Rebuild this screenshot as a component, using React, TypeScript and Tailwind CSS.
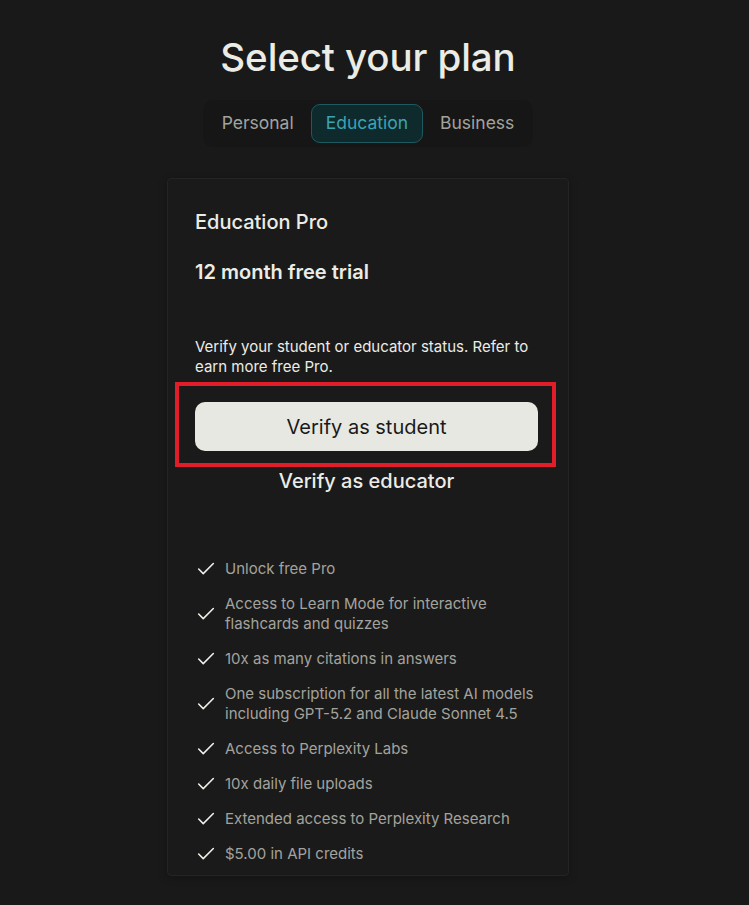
import { Check } from "lucide-react";

const features = [
  "Unlock free Pro",
  "Access to Learn Mode for interactive flashcards and quizzes",
  "10x as many citations in answers",
  "One subscription for all the latest AI models including GPT-5.2 and Claude Sonnet 4.5",
  "Access to Perplexity Labs",
  "10x daily file uploads",
  "Extended access to Perplexity Research",
  "$5.00 in API credits",
];

export default function App() {
  const tabs = ["Personal", "Education", "Business"];

  return (
    <div
      className="min-h-[905px] w-full bg-[#191919] flex flex-col items-center pt-[34px] pr-[13px]"
      style={{ fontFamily: "Inter, 'Noto Sans', sans-serif" }}
    >
      <h1 className="text-[38.5px] leading-[46px] font-medium tracking-[-0.1px] text-[#ecece6]">
        Select your plan
      </h1>

      {/* Plan tabs */}
      <div className="mt-[20px] flex items-center gap-[2px] bg-[#161616] rounded-[10px] px-[4px] py-[4px]">
        {tabs.map((tab) => (
          <button
            key={tab}
            className={
              tab === "Education"
                ? "h-[39px] px-[14px] rounded-[9px] border border-[#1d5a5f] bg-[#0e2a2d] text-[#3aa4b2] text-[17.5px]"
                : "h-[39px] px-[14px] rounded-[9px] border border-transparent text-[#a3a39d] text-[17.5px]"
            }
          >
            {tab}
          </button>
        ))}
      </div>

      {/* Card */}
      <div className="mt-[31px] w-[402px] bg-[#1a1a1a] border border-[#242424] rounded-[4px] pl-[27px] pr-[30px] pt-[29px] pb-[11px] shadow-[0_2px_8px_rgba(0,0,0,0.25)]">
        <h2 className="text-[20px] leading-[28px] font-medium text-[#ecece6]">
          Education Pro
        </h2>
        <p className="mt-[22px] text-[20px] leading-[28px] font-semibold text-[#ecece6]">
          12 month free trial
        </p>

        <p className="mt-[51px] text-[15px] leading-[20px] text-[#ecece6]">
          Verify your student or educator status. Refer to earn more free Pro.
        </p>

        <div className="relative mt-[25px]">
          <button className="w-full h-[49px] rounded-[10px] bg-[#e8e8e3] text-[#1a1a1a] text-[20px] font-normal">
            Verify as student
          </button>
          {/* annotation */}
          <div className="absolute -left-[20px] -right-[18px] -top-[20px] -bottom-[16px] border-[4px] border-[#e11d2a] pointer-events-none" />
        </div>

        <button className="w-full mt-[15px] h-[28px] text-[20px] font-medium text-[#ecece6]">
          Verify as educator
        </button>

        <ul className="mt-[65px] flex flex-col gap-[15px] -mr-[10px]">
          {features.map((f) => (
            <li key={f} className="flex items-center gap-[8px]">
              <Check className="w-[22px] h-[22px] -my-[1px] shrink-0 text-[#f0f0ea]" strokeWidth={1.7} />
              <span className="text-[15px] leading-[20px] text-[#a3a39d]">
                {f}
              </span>
            </li>
          ))}
        </ul>
      </div>
    </div>
  );
}
